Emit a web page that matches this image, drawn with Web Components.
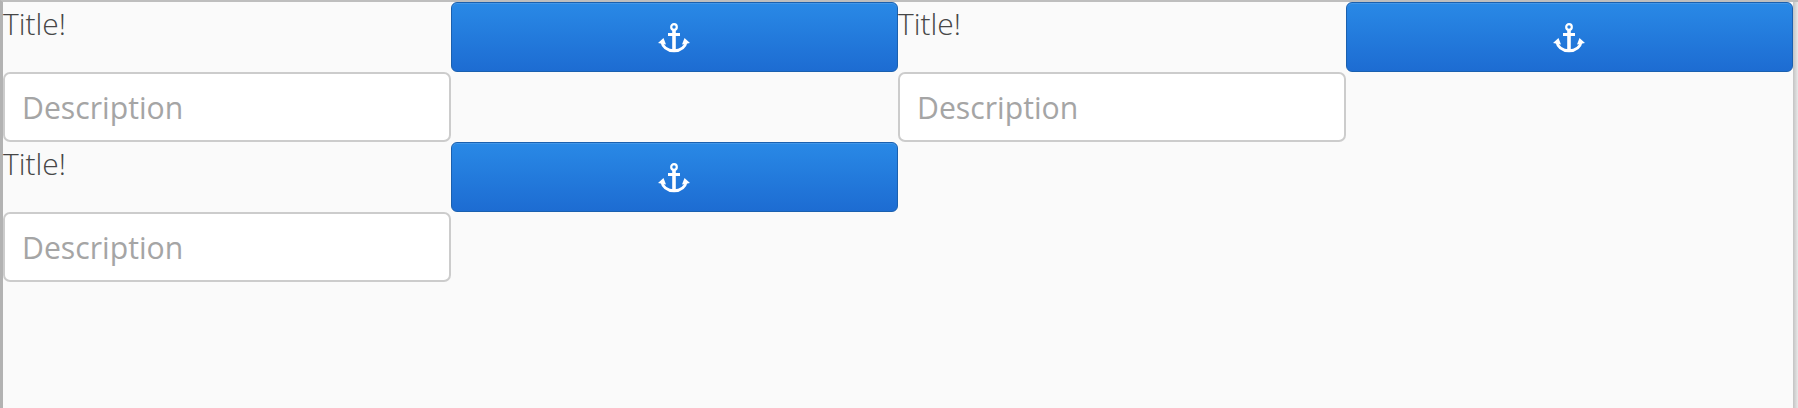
<!DOCTYPE html>
<html>
<head>
<meta charset="utf-8">
<title>Items</title>
<style>
    html, body {
        margin: 0;
        height: 100%;
        overflow: hidden;
    }
</style>
</head>
<body>
<item-board>
    <title-card title-text="Title!" placeholder="Description"></title-card>
    <title-card title-text="Title!" placeholder="Description"></title-card>
    <title-card title-text="Title!" placeholder="Description"></title-card>
</item-board>

<script>
class AnchorButton extends HTMLElement {
    constructor () {
        super()
        this.attachShadow({mode: 'open'})
    }

    connectedCallback () {
        this.shadowRoot.innerHTML = `
            <style>
                :host {
                    display: block;
                }

                button {
                    align-items: center;
                    background: linear-gradient(rgb(41,137,230), rgb(29,108,210));
                    border: 1px solid rgb(26,96,175);
                    border-radius: 6px;
                    box-shadow: inset 0 1px 0 rgba(255,255,255,0.12);
                    box-sizing: border-box;
                    display: flex;
                    height: 100%;
                    justify-content: center;
                    padding: 2px 2px 0 0;
                    width: 100%;
                }

                svg {
                    display: block;
                }
            </style>
            <button type="button">
                <svg width="32" height="30" viewBox="0 0 32 30" fill="none" stroke="#fff">
                    <circle cx="16" cy="4" r="2.8" stroke-width="2.2"/>
                    <path d="M16 7V28" stroke-width="3.6"/>
                    <path d="M10 11.5H22" stroke-width="3"/>
                    <path d="M3.5 18C5 24.5 10 27.8 16 27.8S27 24.5 28.5 18" stroke-width="3"/>
                    <path d="M0 20L5.5 15L8 21.5Z M32 20L26.5 15L24 21.5Z" fill="#fff" stroke="none"/>
                </svg>
            </button>
        `
    }
}

class TitleCard extends HTMLElement {
    constructor () {
        super()
        this.attachShadow({mode: 'open'})
    }

    connectedCallback () {
        this.shadowRoot.innerHTML = `
            <style>
                :host {
                    display: grid;
                    font-family: "Open Sans", sans-serif;
                    grid-template-columns: 448px 447px;
                    grid-template-rows: 70px 70px;
                }

                h2 {
                    color: rgb(70,70,70);
                    font-size: 30px;
                    font-weight: 300;
                    line-height: 38px;
                    margin: 3px 0 0;
                }

                input {
                    background: #fff;
                    border: 2px solid rgb(204,204,204);
                    border-radius: 7px;
                    box-sizing: border-box;
                    font: 400 30.2px "Open Sans", sans-serif;
                    grid-column: 1;
                    height: 69.5px;
                    padding: 2px 17px 0;
                    width: 100%;
                }

                input::placeholder {
                    color: rgb(165,165,165);
                    opacity: 1;
                }
            </style>
            <h2>${this.getAttribute('title-text')}</h2>
            <anchor-button></anchor-button>
            <input type="text" placeholder="${this.getAttribute('placeholder')}">
        `
    }
}

class ItemBoard extends HTMLElement {
    constructor () {
        super()
        this.attachShadow({mode: 'open'})
    }

    connectedCallback () {
        this.shadowRoot.innerHTML = `
            <style>
                :host {
                    background: linear-gradient(to right, rgb(195,195,195), rgb(232,232,232)) right / 5px 100% no-repeat, rgb(250,250,250);
                    border-left: 3px solid rgb(178,178,178);
                    border-top: 2px solid rgb(190,190,190);
                    box-sizing: border-box;
                    display: grid;
                    grid-auto-rows: 140px;
                    grid-template-columns: 895px 895px;
                    height: 100vh;
                    width: 100vw;
                }
            </style>
            <slot></slot>
        `
    }
}

window.customElements.define('anchor-button', AnchorButton)
window.customElements.define('title-card', TitleCard)
window.customElements.define('item-board', ItemBoard)
</script>
</body>
</html>
